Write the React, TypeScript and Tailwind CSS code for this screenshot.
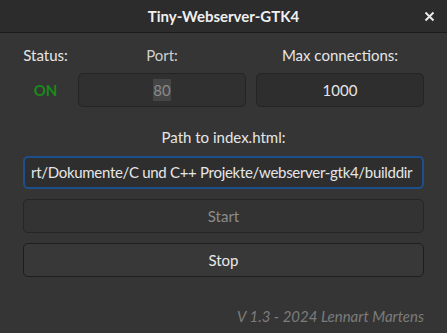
export default function App() {
  return (
    <div
      className="flex h-[333px] w-[447px] flex-col overflow-hidden bg-[#353535] text-[15px] text-[#e6e6e6]"
      style={{ fontFamily: 'Lato, "Noto Sans", sans-serif' }}
    >
      <header className="relative flex h-[33px] shrink-0 items-center justify-center border-b border-[#1c1c1c] bg-[#2c2c2c]">
        <span className="text-[15px] font-bold text-[#f0f0f0]">Tiny-Webserver-GTK4</span>
        <button className="absolute right-[10px] top-[8px] flex h-[16px] w-[16px] items-center justify-center text-[#e8e8e8]">
          <svg width="11" height="11" viewBox="0 0 11 11" fill="none" stroke="currentColor" strokeWidth="2">
            <path d="M1.5 1.5L9.5 9.5M9.5 1.5L1.5 9.5" />
          </svg>
        </button>
      </header>

      <main className="flex flex-1 flex-col px-[23px]">
        <div className="mt-[9px] grid grid-cols-[45px_1fr_1fr] gap-x-[10px]">
          <div className="flex h-[26px] items-center justify-center">Status:</div>
          <div className="flex h-[26px] items-center justify-center text-[#d0d0d0]">Port:</div>
          <div className="flex h-[26px] items-center justify-center">Max connections:</div>

          <div className="mt-[5px] flex h-[34px] items-center justify-center font-bold text-[#1a8a1a]">ON</div>
          <div className="mt-[5px] flex h-[34px] items-center justify-center rounded-[5px] border border-[#242424] bg-[#303030]">
            <span className="bg-[#454545] text-[#8a8a8a]">80</span>
          </div>
          <div className="mt-[5px] flex h-[34px] items-center justify-center rounded-[5px] border border-[#242424] bg-[#2e2e2e]">
            1000
          </div>
        </div>

        <div className="mt-[17px] flex h-[26px] items-center justify-center">Path to index.html:</div>

        <div className="mt-[6px] flex h-[33px] items-center overflow-hidden whitespace-nowrap rounded-[5px] border-2 border-[#1d4f8a] bg-[#2e2e2e] px-[6px]">
          <span className="tracking-[-0.3px]">rt/Dokumente/C und C++ Projekte/webserver-gtk4/builddir</span>
        </div>

        <button className="mt-[10px] h-[34px] rounded-[5px] border border-[#262626] bg-[#333333] text-[#8c8c8c]">
          Start
        </button>
        <button className="mt-[10px] h-[34px] rounded-[5px] border border-[#1e1e1e] bg-[#383838] text-[#e8e8e8]">
          Stop
        </button>

        <div className="mt-auto mb-[5px] flex h-[24px] items-center justify-end italic text-[#7c7c7c]">
          V 1.3 - 2024 Lennart Martens
        </div>
      </main>
    </div>
  );
}
